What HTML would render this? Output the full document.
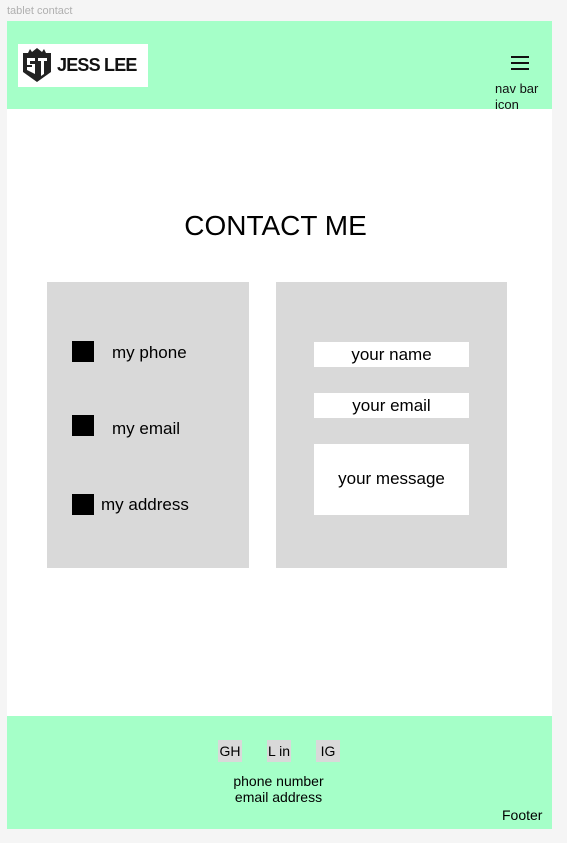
<!DOCTYPE html>
<html><head><meta charset="utf-8"><style>
body{margin:0;width:567px;height:843px;background:#f5f5f5;font-family:"Liberation Sans",sans-serif;position:relative;overflow:hidden}
.a{position:absolute}
</style></head><body>
<div class="a" style="left:7px;top:5px;font-size:11px;color:#b0b0b0">tablet contact</div>
<div class="a" style="left:7px;top:21px;width:545px;height:695px;background:#fff"></div>
<div class="a" style="left:7px;top:21px;width:545px;height:88px;background:#a5ffc8"></div>
<div class="a" style="left:18px;top:44px;width:130px;height:43px;background:#fff"></div>
<svg class="a" style="left:22px;top:48px" width="30" height="35" viewBox="0 0 30 35">
<path d="M1 5 L6 5 L8 1 L10 4 L15 0 L20 4 L22 1 L24 5 L29 5 L29 24 L15 34 L1 24 Z" fill="#222"/>
<path d="M5 10 H13 V13 H8 V16 H13 V26 L5 22 V19 H10 V17 H5 Z M16 10 H25 V13 H22 V26 L19 28 V13 H16 Z" fill="#fff"/>
</svg>
<div class="a" style="left:57px;top:55px;font-size:18px;font-weight:bold;color:#111;letter-spacing:-0.8px">JESS LEE</div>
<div class="a" style="left:511px;top:56px;width:18px;height:2px;background:#111;box-shadow:0 6px 0 #111,0 12px 0 #111"></div>
<div class="a" style="left:495px;top:81px;font-size:13px;line-height:16px;color:#111">nav bar<br>icon</div>
<div class="a" style="left:0;width:551px;top:210px;text-align:center;font-size:28px;color:#000">CONTACT ME</div>
<div class="a" style="left:47px;top:282px;width:202px;height:286px;background:#d9d9d9"></div>
<div class="a" style="left:72px;top:341px;width:22px;height:21px;background:#000"></div>
<div class="a" style="left:112px;top:343px;font-size:17px">my phone</div>
<div class="a" style="left:72px;top:415px;width:22px;height:21px;background:#000"></div>
<div class="a" style="left:112px;top:419px;font-size:17px">my email</div>
<div class="a" style="left:72px;top:494px;width:22px;height:21px;background:#000"></div>
<div class="a" style="left:101px;top:495px;font-size:17px">my address</div>
<div class="a" style="left:276px;top:282px;width:231px;height:286px;background:#d9d9d9"></div>
<div class="a" style="left:314px;top:342px;width:155px;height:25px;background:#fff;text-align:center;line-height:25px;font-size:17px">your name</div>
<div class="a" style="left:314px;top:393px;width:155px;height:25px;background:#fff;text-align:center;line-height:25px;font-size:17px">your email</div>
<div class="a" style="left:314px;top:444px;width:155px;height:71px;background:#fff;text-align:center;padding-top:25px;box-sizing:border-box;font-size:17px">your message</div>
<div class="a" style="left:7px;top:716px;width:545px;height:113px;background:#a5ffc8"></div>
<div class="a" style="left:218px;top:740px;width:24px;height:22px;background:#d9d9d9;font-size:14px;line-height:22px;text-align:center">GH</div>
<div class="a" style="left:267px;top:740px;width:24px;height:22px;background:#d9d9d9;font-size:14px;line-height:22px;text-align:center">L in</div>
<div class="a" style="left:316px;top:740px;width:24px;height:22px;background:#d9d9d9;font-size:14px;line-height:22px;text-align:center">IG</div>
<div class="a" style="left:200px;width:157px;top:773px;text-align:center;font-size:14px;line-height:16px">phone number<br>email address</div>
<div class="a" style="left:502px;top:807px;font-size:14px">Footer</div>
</body></html>
